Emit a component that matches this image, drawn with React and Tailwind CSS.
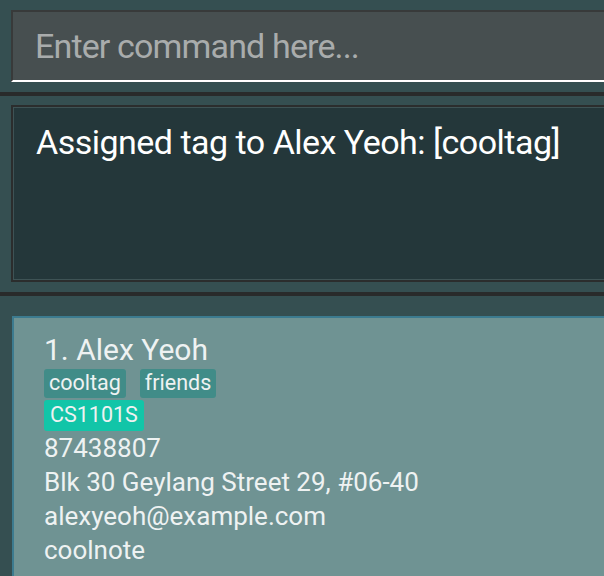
import React from 'react';

const tags = ['cooltag', 'friends'];

const App = () => {
  return (
    <div className="w-[604px] h-[576px] overflow-hidden bg-[#354f51] font-['Roboto',sans-serif]">
      {/* Command box */}
      <div className="pt-[10px] pl-[11px] pb-[10px]">
        <div className="h-[72px] border-l-2 border-t-2 border-[#383a3a] bg-[#474f50] border-b-2 border-b-white flex items-center pl-[22px]">
          <span className="text-[34px] text-[#a9acac] tracking-[-0.025em] leading-none">Enter command here...</span>
        </div>
      </div>
      <div className="h-[4px] bg-[#292b2b]" />

      {/* Result display */}
      <div className="pt-[9px] pl-[11px] pb-[10px]">
        <div className="h-[177px] border-l-2 border-t-2 border-b-2 border-[#2b2d2d]">
          <div className="h-full border-l border-t border-b border-[#3e5355] bg-[#24373a] pl-[22px] pt-[13px]">
            <p className="text-[34px] text-white tracking-[-0.015em] leading-tight">Assigned tag to Alex Yeoh: [cooltag]</p>
          </div>
        </div>
      </div>
      <div className="h-[4px] bg-[#292b2b]" />

      {/* Person list */}
      <div className="pt-[20px] pl-[12px]">
        <div className="h-[300px] border-l-2 border-t-2 border-[#3c7b8f] bg-[#6f9393] pl-[30px] pt-[14px] text-[#eef2f2]">
          <div className="text-[30px] leading-[36px]">1. Alex Yeoh</div>
          <div className="flex gap-[14px] mt-[1px]">
            {tags.map((t) => (
              <span key={t} className="bg-[#418c88] rounded-[3px] px-[5px] h-[29px] flex items-center text-[21.5px]">{t}</span>
            ))}
          </div>
          <div className="flex mt-[2px]">
            <span className="bg-[#12c5a8] rounded-[3px] px-[6px] h-[31px] flex items-center text-[21.5px]">CS1101S</span>
          </div>
          <div className="text-[26px] leading-[34px]">
            <div>87438807</div>
            <div>Blk 30 Geylang Street 29, #06-40</div>
            <div>alexyeoh@example.com</div>
            <div>coolnote</div>
          </div>
        </div>
      </div>
    </div>
  );
};

export default App;
